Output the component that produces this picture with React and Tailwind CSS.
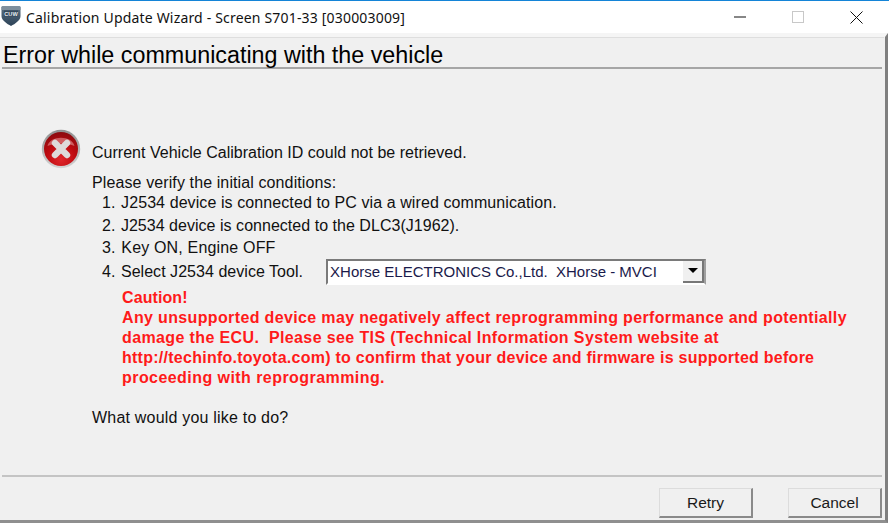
const sans = { fontFamily: '"Liberation Sans", Arial, sans-serif' };

function AppIcon() {
  return (
    <svg width="20" height="20" viewBox="0 0 20 20" className="shrink-0 mt-[-2px]">
      <defs>
        <linearGradient id="shield" x1="0" y1="0" x2="0" y2="1">
          <stop offset="0" stopColor="#5b7183" />
          <stop offset="1" stopColor="#2c4257" />
        </linearGradient>
      </defs>
      <path d="M0.5 1.5 Q0.5 0.3 1.7 0.3 H18.3 Q19.5 0.3 19.5 1.5 V10 C19.5 14.5 14 17.8 10 20 C6 17.8 0.5 14.5 0.5 10 Z" fill="url(#shield)" />
      <path d="M0.5 1.5 Q0.5 0.3 1.7 0.3 H18.3 Q19.5 0.3 19.5 1.5 V4 H0.5 Z" fill="#7e8f9d" />
      <rect x="3" y="4.5" width="14" height="6" fill="#34495c" />
      <text x="10" y="9.6" textAnchor="middle" fontSize="5.6" fontWeight="700" fill="#e8edf1" style={sans}>CUW</text>
    </svg>
  );
}

function ErrorIcon() {
  return (
    <svg width="40" height="40" viewBox="0 0 40 40" className="shrink-0">
      <defs>
        <radialGradient id="red" cx="0.5" cy="0.8" r="0.8">
          <stop offset="0" stopColor="#e0262b" />
          <stop offset="0.55" stopColor="#bd0a10" />
          <stop offset="1" stopColor="#8a0b0f" />
        </radialGradient>
        <linearGradient id="ring" x1="0" y1="0" x2="0" y2="1">
          <stop offset="0" stopColor="#8f8f8f" />
          <stop offset="1" stopColor="#d4d4d4" />
        </linearGradient>
      </defs>
      <circle cx="20" cy="20" r="19.2" fill="url(#ring)" />
      <circle cx="20" cy="20" r="17" fill="url(#red)" />
      <path d="M6.5 17 C9 6 31 6 33.5 17 C27 13.5 13 13.5 6.5 17 Z" fill="#eba0a2" opacity="0.55" />
      <path d="M14 14 L26 26 M26 14 L14 26" stroke="#dedada" strokeWidth="6.4" strokeLinecap="round" />
    </svg>
  );
}

function WinButton({ children }) {
  return (
    <button className="flex-1 h-full flex items-center justify-center min-w-0">{children}</button>
  );
}

function DialogButton({ label }) {
  return (
    <button className="w-[94px] h-[30px] bg-[#f0f0f0] text-[15.5px] text-[#1a1a1a] border border-[#dcdcdc] border-r-2 border-b-2 border-r-[#8a8a8a] border-b-[#8a8a8a]">
      {label}
    </button>
  );
}

export default function App() {
  return (
    <div className="w-[889px] h-[524px] bg-white flex flex-col overflow-hidden text-black pb-px" style={sans}>
      <div className="h-px bg-[#1484d7] shrink-0" />
      <div className="h-[32px] shrink-0 flex items-center pl-[1px] bg-white">
        <AppIcon />
        <span className="ml-[5px] text-[14px] text-[#111] tracking-[0.18px]" style={{ fontFamily: '"Noto Sans", "Open Sans", sans-serif' }}>
          Calibration Update Wizard - Screen S701-33 [030003009]
        </span>
        <div className="ml-auto flex h-full w-[175px] mr-[3px]">
          <WinButton>
            <svg width="12" height="2" viewBox="0 0 12 2"><rect width="12" height="1" y="0.5" fill="#111" /></svg>
          </WinButton>
          <WinButton>
            <svg width="12" height="12" viewBox="0 0 12 12"><rect x="0.5" y="0.5" width="11" height="11" fill="none" stroke="#c8c8c8" /></svg>
          </WinButton>
          <WinButton>
            <svg width="13" height="13" viewBox="0 0 13 13"><path d="M0.5 0.5 L12.5 12.5 M12.5 0.5 L0.5 12.5" stroke="#111" strokeWidth="1" /></svg>
          </WinButton>
        </div>
      </div>
      <div className="flex-1 min-h-0 flex flex-col bg-[#f0f0f0] border-t-[4px] border-t-[#f5f5f5] border-r-[3px] border-r-[#7f7f7f] border-b-[3px] border-b-[#8f8f8f] mr-px">
        <div className="border-t border-t-[#dedede] pt-[5px] pl-[3px] mr-[1px]">
          <h1 className="text-[23.3px] leading-[24px] font-normal border-b-2 border-b-[#a6a6a6] ml-[-1px] pl-[1px] mr-[2px]">
            Error while communicating with the vehicle
          </h1>
        </div>
        <div className="flex-1 min-h-0 pt-[60px] pl-[41px] text-[16px] leading-[20px] text-[#111]">
          <div className="flex items-start">
            <ErrorIcon />
            <div className="ml-[11px] pt-[14px] flex-1">
              <p className="tracking-[0.02px]">Current Vehicle Calibration ID could not be retrieved.</p>
              <p className="mt-[10px] tracking-[0.11px]">Please verify the initial conditions:</p>
              <ol className="pl-[10px]">
                <li className="mb-[2.5px] tracking-[0.09px]"><span className="mr-px">1.</span> J2534 device is connected to PC via a wired communication.</li>
                <li className="mb-[2.5px] tracking-[0.03px]"><span className="mr-px">2.</span> J2534 device is connected to the DLC3(J1962).</li>
                <li className="mb-[2.5px] tracking-[0.17px]"><span className="mr-px">3.</span> Key ON, Engine OFF</li>
                <li className="flex items-center mt-[-2px]">
                  <span className="tracking-[0.04px]"><span className="mr-px">4.</span> Select J2534 device Tool.</span>
                  <div className="ml-[23px] w-[380px] h-[26px] bg-white border-2 border-[#7a7a7a] border-b-white border-r-[#a0a0a0] flex items-center justify-between pl-[2px] text-[15px] text-[#1a1a4a]">
                    <span>XHorse ELECTRONICS Co.,Ltd.&nbsp; XHorse - MVCI</span>
                    <span className="w-[21px] h-[22px] bg-[#f0f0f0] border-r-2 border-b-2 border-[#777] flex items-center justify-center">
                      <svg width="10" height="5" viewBox="0 0 10 5"><path d="M0 0 H10 L5 5 Z" fill="#000" /></svg>
                    </span>
                  </div>
                </li>
              </ol>
              <div className="pl-[30px] font-bold text-[#ff1a1a] mt-[3px]">
                <p className="tracking-[0.1px]">Caution!</p>
                <p className="w-[740px]">
                  <span className="block tracking-[0.355px]">Any unsupported device may negatively affect reprogramming performance and potentially</span>
                  <span className="block tracking-[0.38px]">damage the ECU.&nbsp; Please see TIS (Technical Information System website at</span>
                  <span className="block tracking-[0.26px]">http://techinfo.toyota.com) to confirm that your device and firmware is supported before</span>
                  <span className="block tracking-[0.44px]">proceeding with reprogramming.</span>
                </p>
              </div>
              <p className="mt-[20px] tracking-[0.2px]">What would you like to do?</p>
            </div>
          </div>
        </div>
        <div className="h-[45px] shrink-0 mx-[2px] mr-[3px] border-t-2 border-t-[#c4c4c4] flex justify-end items-start gap-[35px] pt-[11px]">
          <DialogButton label="Retry" />
          <DialogButton label="Cancel" />
        </div>
      </div>
    </div>
  );
}
